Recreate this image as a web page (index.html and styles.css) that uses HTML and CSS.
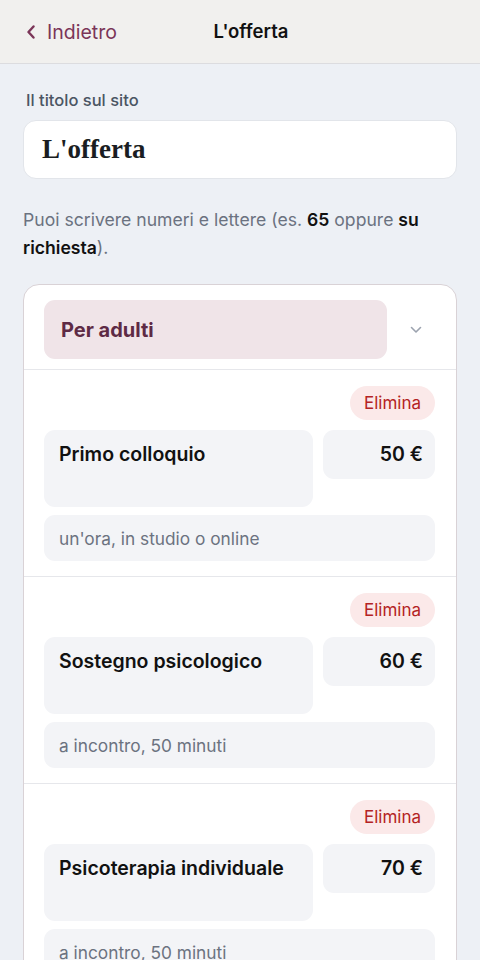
FILE: index.html
```html
<!DOCTYPE html>
<html lang="it">
<head>
<meta charset="utf-8">
<title>L'offerta</title>
<link rel="stylesheet" href="styles.css">
</head>
<body>
<header class="topbar">
  <a class="back" href="#">
    <svg class="back-icon" width="10" height="14" viewBox="0 0 10 14"><path d="M7.5 1.5 L2.5 7 L7.5 12.5" fill="none" stroke="currentColor" stroke-width="2.4" stroke-linecap="round" stroke-linejoin="round"/></svg>
    <span>Indietro</span>
  </a>
  <h1 class="title">L'offerta</h1>
</header>
<main class="content">
  <label class="label">Il titolo sul sito</label>
  <div class="title-input">L'offerta</div>
  <p class="help">Puoi scrivere numeri e lettere (es. <b>65</b> oppure <b>su richiesta</b>).</p>

  <section class="card">
    <div class="card-head">
      <div class="group-field">Per adulti</div>
      <div class="chevron">
        <svg width="12" height="8" viewBox="0 0 12 8"><path d="M1.5 1.5 L6 6 L10.5 1.5" fill="none" stroke="currentColor" stroke-width="1.6" stroke-linecap="round" stroke-linejoin="round"/></svg>
      </div>
    </div>

    <div class="item">
      <div class="item-actions"><button class="delete">Elimina</button></div>
      <div class="item-row">
        <div class="field name">Primo colloquio</div>
        <div class="field price">50 €</div>
      </div>
      <div class="field desc">un'ora, in studio o online</div>
    </div>

    <div class="item">
      <div class="item-actions"><button class="delete">Elimina</button></div>
      <div class="item-row">
        <div class="field name">Sostegno psicologico</div>
        <div class="field price">60 €</div>
      </div>
      <div class="field desc">a incontro, 50 minuti</div>
    </div>

    <div class="item">
      <div class="item-actions"><button class="delete">Elimina</button></div>
      <div class="item-row">
        <div class="field name">Psicoterapia individuale</div>
        <div class="field price">70 €</div>
      </div>
      <div class="field desc">a incontro, 50 minuti</div>
    </div>
  </section>
</main>
</body>
</html>
```

FILE: styles.css
```css
* { box-sizing: border-box; }
html, body { margin: 0; padding: 0; }
body {
  background: #edf0f5;
  font-family: Inter, "Noto Sans", "Liberation Sans", sans-serif;
  color: #111827;
  width: 480px;
  height: 960px;
  overflow: hidden;
}
.topbar {
  height: 64px;
  background: #f1f0ee;
  border-bottom: 1px solid #dcdcdf;
  display: flex;
  align-items: center;
  position: relative;
  padding: 0 0 0 26px;
}
.back {
  display: flex;
  align-items: center;
  gap: 11px;
  color: #7b3558;
  text-decoration: none;
  font-size: 19.5px;
  font-weight: 400;
}
.back-icon { display: block; }
.title {
  margin: 0;
  position: absolute;
  left: 0;
  right: 0;
  text-align: center;
  top: 19px;
  font-size: 18.5px;
  line-height: 24px;
  font-weight: 600;
  color: #111;
  pointer-events: none;
  padding-left: 22px;
}
.content {
  padding: 0 23px;
}
.label {
  display: block;
  margin: 26px 0 0 3px;
  font-size: 16.5px;
  line-height: 20px;
  font-weight: 500;
  color: #4b5563;
}
.title-input {
  margin-top: 10px;
  height: 59px;
  background: #fff;
  border: 1px solid #e2e5ea;
  border-radius: 13px;
  padding: 0 18px;
  display: flex;
  align-items: center;
  font-family: "Liberation Serif", "DejaVu Serif", serif;
  font-weight: 700;
  font-size: 27px;
  color: #1a1d22;
}
.help {
  margin: 27px 0 0;
  font-size: 17.6px;
  line-height: 28px;
  color: #6b7280;
}
.help b { color: #111; font-weight: 600; }
.card {
  margin-top: 22px;
  background: #fff;
  border: 1px solid #d9d2d6;
  border-radius: 16px;
  overflow: hidden;
}
.card-head {
  display: flex;
  align-items: center;
  padding: 15px 0 10px 20px;
  border-bottom: 1px solid #e6e7eb;
}
.group-field {
  flex: 0 0 343px;
  height: 59px;
  background: #f0e4e8;
  border-radius: 11px;
  display: flex;
  align-items: center;
  padding: 0 17px;
  font-size: 20px;
  font-weight: 700;
  color: #5e2a45;
}
.chevron {
  flex: 1;
  display: flex;
  justify-content: center;
  padding-right: 12px;
  color: #9ca3af;
}
.chevron svg { display: block; }
.item {
  padding: 16px 21px 15px 20px;
  border-bottom: 1px solid #e6e7eb;
}
.item-actions {
  display: flex;
  justify-content: flex-end;
}
.delete {
  height: 34px;
  padding: 0 14px;
  border: none;
  border-radius: 17px;
  background: #fbe9e9;
  color: #b42323;
  font-family: inherit;
  font-size: 17px;
}
.item-row {
  display: flex;
  gap: 10px;
  margin-top: 10px;
  align-items: flex-start;
}
.field {
  background: #f3f4f7;
  border-radius: 11px;
}
.name {
  flex: 1;
  height: 77px;
  padding: 12px 15px;
  font-size: 19.5px;
  line-height: 24px;
  font-weight: 600;
  color: #111;
}
.price {
  flex: 0 0 112px;
  height: 49px;
  padding: 12px 12px;
  text-align: right;
  font-size: 19.5px;
  line-height: 24px;
  font-weight: 600;
  color: #111;
}
.desc {
  margin-top: 8px;
  height: 46px;
  padding: 0 15px;
  display: flex;
  align-items: center;
  font-size: 17.3px;
  color: #6b7280;
}
```
